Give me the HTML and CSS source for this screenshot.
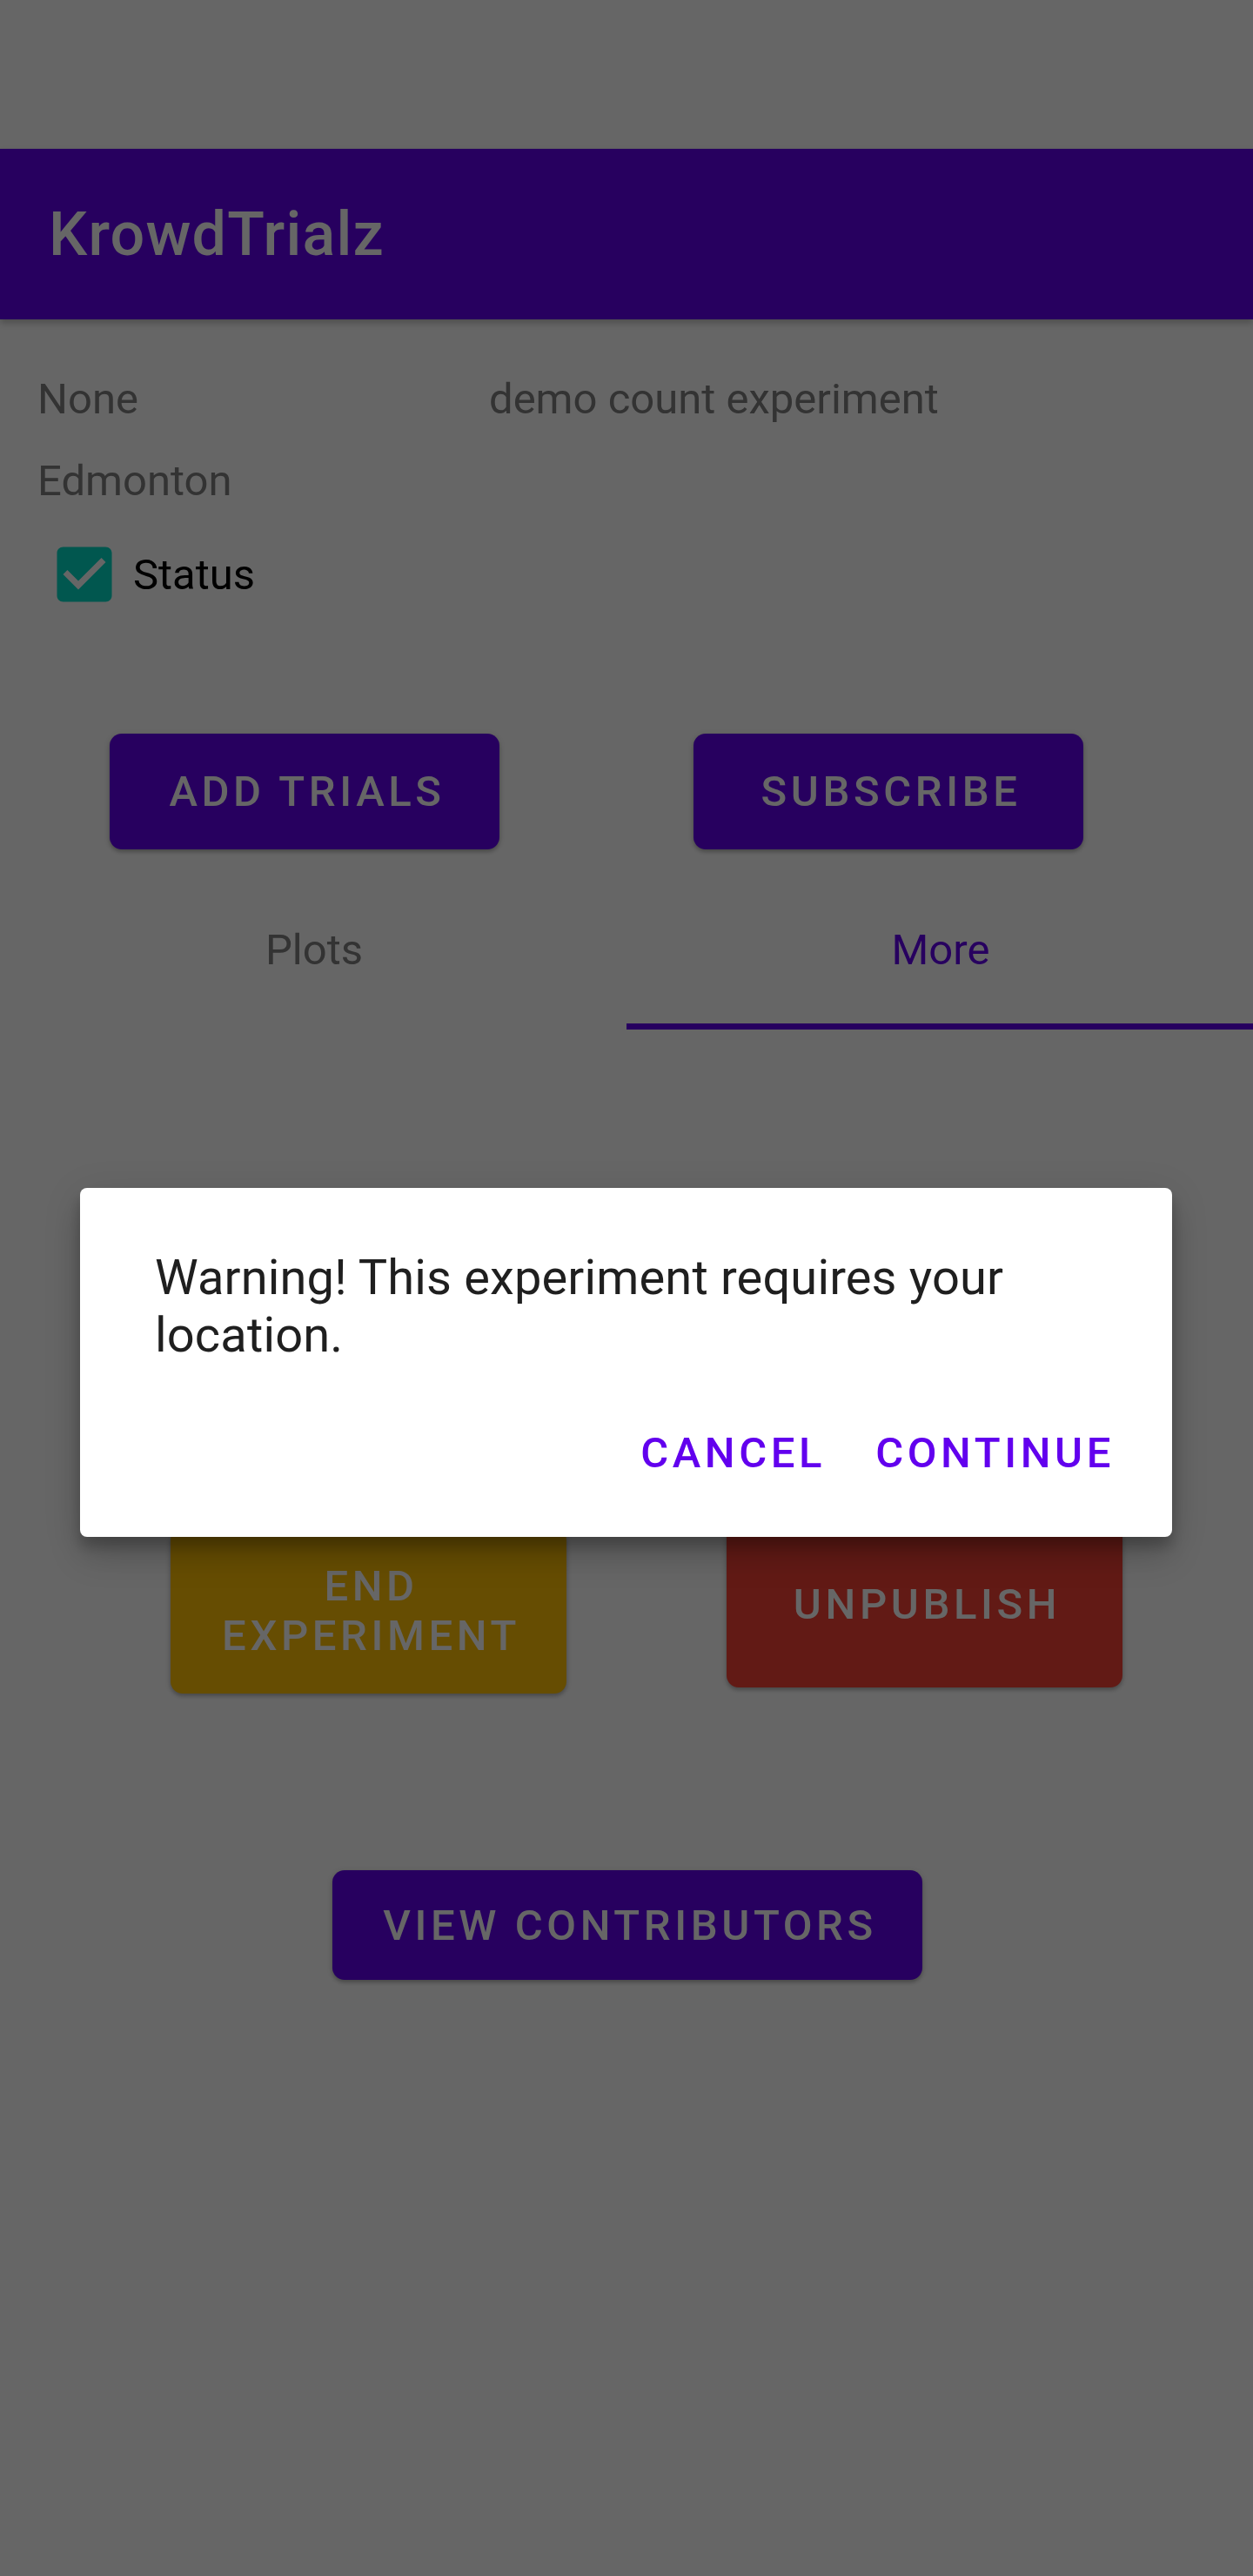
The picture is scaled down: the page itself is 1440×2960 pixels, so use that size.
FILE: index.html
```html
<!DOCTYPE html>
<html>
<head>
<meta charset="utf-8">
<title>KrowdTrialz</title>
<link rel="stylesheet" href="styles.css">
</head>
<body>
<div class="page">
  <div class="statusbar"></div>
  <header class="appbar"><h1 class="title">KrowdTrialz</h1></header>
  <main class="content">
    <div class="info-row"><span class="owner">None</span><span class="desc">demo count experiment</span></div>
    <div class="region">Edmonton</div>
    <label class="check-row">
      <svg class="checkbox" width="84" height="84" viewBox="0 0 24 24"><path fill="#03DAC5" d="M19 3H5c-1.11 0-2 .9-2 2v14c0 1.1.89 2 2 2h14c1.11 0 2-.9 2-2V5c0-1.1-.89-2-2-2zm-9 14l-5-5 1.41-1.41L10 14.170l7.59-7.59L19 8l-9 9z"/></svg>
      <span class="check-label">Status</span>
    </label>
    <div class="actions">
      <button class="btn btn-primary btn-action">Add trials</button>
      <button class="btn btn-primary btn-action">Subscribe</button>
    </div>
  </main>
  <nav class="tabs">
    <div class="tab">Plots</div>
    <div class="tab tab-active">More</div>
  </nav>
  <section class="more">
    <div class="danger-row">
      <button class="btn btn-amber">End<br>experiment</button>
      <button class="btn btn-red">Unpublish</button>
    </div>
    <div class="contrib-row">
      <button class="btn btn-primary btn-contrib">View contributors</button>
    </div>
  </section>
</div>
<div class="scrim"></div>
<div class="dialog">
  <p class="dialog-msg">Warning! This experiment requires your location.</p>
  <div class="dialog-actions">
    <button class="dlg-btn">Cancel</button>
    <button class="dlg-btn">Continue</button>
  </div>
</div>
</body>
</html>
```

FILE: styles.css
```css
* { box-sizing: border-box; }
html, body { margin: 0; padding: 0; }
body {
  width: 1440px;
  min-height: 2960px;
  background: #ffffff;
  font-family: Roboto, "Noto Sans", "Liberation Sans", sans-serif;
  overflow: hidden;
}
.page {
  min-height: 2960px;
  background: #ffffff;
}
.statusbar {
  height: 171px;
  background: #ffffff;
}
.appbar {
  height: 196px;
  background: #6200EE;
  display: flex;
  align-items: center;
  padding-left: 56px;
  box-shadow: 0 4px 8px rgba(0,0,0,0.25);
  position: relative;
  z-index: 1;
}
.title {
  margin: 0;
  color: #ffffff;
  font-size: 70px;
  font-weight: 500;
  letter-spacing: 1.2px;
  line-height: 82px;
}
.content {
  padding: 63px 0 0 43px;
  font-size: 49px;
  line-height: 57px;
}
.info-row {
  display: grid;
  grid-template-columns: 519px 1fr;
  color: #7f7f7f;
}
.region {
  margin-top: 37px;
  color: #7f7f7f;
}
.check-row {
  margin-top: 37px;
  display: flex;
  align-items: center;
  height: 84px;
}
.checkbox {
  margin-left: 12px;
  display: block;
}
.check-label {
  margin-left: 14px;
  color: #000000;
}
.actions {
  margin-top: 141px;
  margin-left: -43px;
  padding-left: 126px;
  display: flex;
  gap: 223px;
}
.btn {
  border: none;
  border-radius: 14px;
  font-family: Roboto, "Noto Sans", "Liberation Sans", sans-serif;
  font-size: 49px;
  font-weight: 500;
  letter-spacing: 4.6px;
  text-transform: uppercase;
  color: #ffffff;
  line-height: 57px;
  padding: 0 0 0 6px;
  box-shadow: 0 3px 4px rgba(0,0,0,0.22), 0 1px 8px rgba(0,0,0,0.12);
}
.btn-primary { background: #6200EE; }
.btn-action {
  width: 448px;
  height: 133px;
}
.tabs {
  margin-top: 39px;
  display: flex;
  height: 168px;
}
.tab {
  flex: 1;
  display: flex;
  align-items: center;
  justify-content: center;
  padding-bottom: 16px;
  padding-left: 2px;
  font-size: 49px;
  line-height: 57px;
  color: #7f7f7f;
}
.tab-active {
  color: #6200EE;
  border-bottom: 7px solid #6200EE;
  padding-bottom: 9px;
}
.more {
  padding-top: 564px;
}
.danger-row {
  display: flex;
  align-items: flex-start;
  padding-left: 196px;
  gap: 184px;
}
.btn-amber {
  width: 455px;
  height: 190px;
  margin-top: 9px;
  background: #FFC107;
}
.btn-red {
  width: 455px;
  height: 192px;
  background: #F44336;
}
.contrib-row {
  margin-top: 203px;
  padding-left: 2px;
  display: flex;
  justify-content: center;
}
.btn-contrib {
  width: 678px;
  height: 126px;
}
.scrim {
  position: fixed;
  inset: 0;
  background: rgba(0,0,0,0.6);
  z-index: 10;
}
.dialog {
  position: absolute;
  left: 92px;
  top: 1365px;
  width: 1255px;
  height: 401px;
  background: #ffffff;
  border-radius: 8px;
  z-index: 11;
  padding: 71px 84px 0 86px;
  box-shadow: 0 24px 38px rgba(0,0,0,0.14), 0 9px 46px rgba(0,0,0,0.12), 0 11px 15px rgba(0,0,0,0.2);
}
.dialog-msg {
  margin: 0;
  font-size: 56px;
  line-height: 65.6px;
  letter-spacing: 0.15px;
  color: #1f1f1f;
}
.dialog-actions {
  margin-top: 74px;
  margin-right: -46px;
  display: flex;
  justify-content: flex-end;
  gap: 1px;
}
.dlg-btn {
  background: none;
  border: none;
  padding: 0 28px;
  font-family: Roboto, "Noto Sans", "Liberation Sans", sans-serif;
  font-size: 49px;
  font-weight: 500;
  letter-spacing: 4.6px;
  text-transform: uppercase;
  line-height: 57px;
  color: #6200EE;
}
```
